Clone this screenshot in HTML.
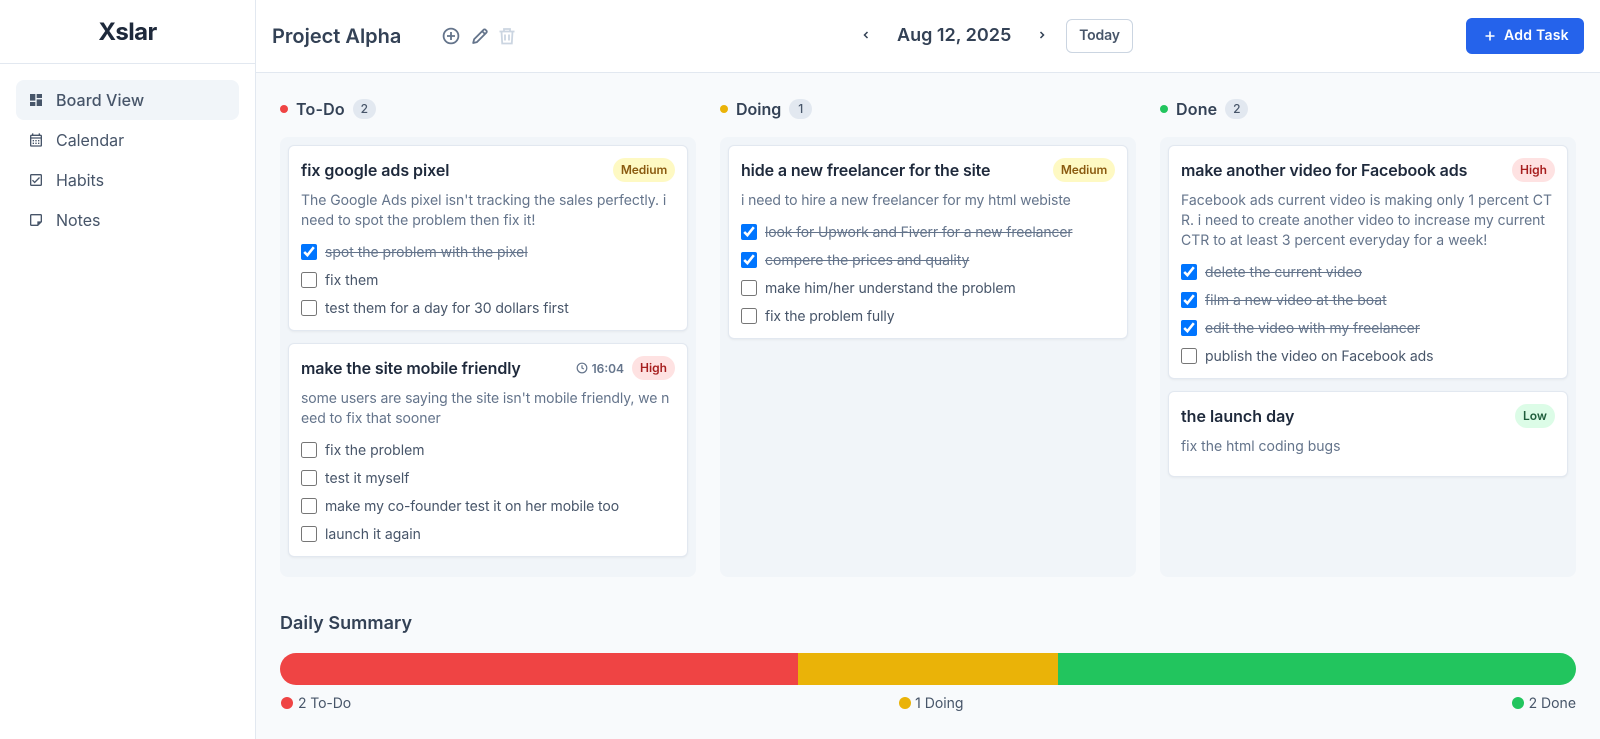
<!DOCTYPE html>
<html><head><meta charset="utf-8"><title>Xslar</title>
<style>
*{box-sizing:border-box}
html,body{margin:0;padding:0;width:1600px;height:739px;overflow:hidden;background:#f8fafc;font-family:Inter,"Liberation Sans",sans-serif;color:#334155}
.side{position:absolute;left:0;top:0;width:256px;height:739px;background:#fff;border-right:1px solid #e2e8f0}
.logo{height:64px;border-bottom:1px solid #e2e8f0;text-align:center;font-size:24px;font-weight:700;line-height:64px;color:#1e293b;letter-spacing:-.6px}
.nav{padding:16px}
.nav div{height:40px;border-radius:8px;display:flex;align-items:center;padding-left:12px;font-size:16px;color:#475569;gap:12px}
.nav div.on{background:#f1f5f9;font-weight:500;letter-spacing:.1px}
.nav svg{width:16px;height:16px;fill:#475569;flex:none}
.top{position:absolute;left:256px;top:0;width:1344px;height:73px;background:#fff;border-bottom:1px solid #e2e8f0}
.a{position:absolute;white-space:nowrap}
.col-h{position:absolute;top:95px;height:28px;display:flex;align-items:center;font-size:16px;font-weight:600;color:#334155;letter-spacing:.2px}
.dot{width:8px;height:8px;border-radius:50%;margin-right:8px}
.cnt{margin-left:8px;height:20px;width:23px;border-radius:10px;background:#e2e8f0;font-size:12px;font-weight:500;color:#475569;text-align:center;line-height:20px;letter-spacing:0}
.col{position:absolute;top:137px;width:416px;height:440px;background:#f1f5f9;border-radius:8px;padding:8px;display:flex;flex-direction:column;gap:12px}
.card{background:#fff;border:1px solid #e2e8f0;border-radius:6px;padding:12px;box-shadow:0 1px 2px rgba(0,0,0,.05)}
.hd{display:flex;align-items:center;height:24px}
.t{font-size:16px;font-weight:600;color:#1e293b;flex:1;white-space:nowrap}
.b{height:24px;border-radius:12px;padding:0 8px;font-size:12px;font-weight:600;line-height:24px;white-space:nowrap}
.m{background:#fef9c3;color:#8a5a10;width:62px;padding:0;text-align:center;letter-spacing:-.1px}.h{background:#fee2e2;color:#a61e1e}.l{background:#dcfce7;color:#1f5e3c}
.tm{display:flex;align-items:center;font-size:12px;font-weight:600;color:#64748b;margin-right:8px;gap:4px}
.d{margin:8px 0;font-size:14px;line-height:20px;color:#64748b;white-space:nowrap;position:relative;top:1px}
.d span{display:block}
.li{margin-top:12px;display:flex;flex-direction:column;gap:8px}
.li label{display:flex;align-items:center;height:20px;font-size:14px;color:#475569;gap:8px;white-space:nowrap}
.li input{width:16px;height:16px;margin:0;flex:none}
.li s{color:#64748b}
.sum{left:280px;top:611px;font-size:18px;font-weight:600;line-height:26px;color:#334155;letter-spacing:.05px}
.bar{position:absolute;left:280px;top:653px;width:1296px;height:32px;border-radius:16px;overflow:hidden;display:flex}
.bar i{display:block;height:32px}
.leg{position:absolute;left:280px;top:693px;width:1296px;height:20px;display:flex;justify-content:space-between;font-size:14px;color:#475569}
.leg span{display:flex;align-items:center;gap:5px}
.leg i{display:block;width:12px;height:12px;border-radius:50%}
</style></head><body>
<div class="side">
<div class="logo">Xslar</div>
<div class="nav">
<div class="on"><svg viewBox="0 0 24 24"><path d="M3 13h8V3H3v10zm0 8h8v-6H3v6zm10 0h8V11h-8v10zm0-18v6h8V3h-8z"/></svg>Board View</div>
<div><svg viewBox="0 0 24 24"><path d="M19 4h-1V2h-2v2H8V2H6v2H5c-1.11 0-1.99.9-1.99 2L3 20c0 1.1.89 2 2 2h14c1.1 0 2-.9 2-2V6c0-1.1-.9-2-2-2zm0 16H5V10h14v10zm0-12H5V6h14v2zM9 14H7v-2h2v2zm4 0h-2v-2h2v2zm4 0h-2v-2h2v2zm-8 4H7v-2h2v2zm4 0h-2v-2h2v2zm4 0h-2v-2h2v2z"/></svg>Calendar</div>
<div><svg viewBox="0 0 24 24"><path d="M19 3H5c-1.1 0-2 .9-2 2v14c0 1.1.9 2 2 2h14c1.1 0 2-.9 2-2V5c0-1.1-.9-2-2-2zm0 16H5V5h14v14zM17.99 9l-1.41-1.42-6.59 6.59-2.58-2.57-1.42 1.41 4 3.99z"/></svg>Habits</div>
<div><svg viewBox="0 0 24 24"><path d="M19 3H4.99C3.89 3 3 3.9 3 5l.01 14c0 1.1.89 2 1.99 2h10l6-6V5c0-1.1-.9-2-2-2zM5 19V5h14v9h-5v5H5z"/></svg>Notes</div>
</div></div>

<div class="top"></div>
<div class="a" style="left:272px;top:22px;font-size:20px;font-weight:600;line-height:28px;color:#334155">Project Alpha</div>
<svg class="a" style="left:442px;top:27px" width="18" height="18" viewBox="0 0 18 18" fill="none" stroke="#64748b" stroke-width="1.8"><circle cx="9" cy="9" r="7.4"/><path d="M9 5v8M5 9h8"/></svg>
<svg class="a" style="left:471px;top:27px" width="18" height="18" viewBox="0 0 18 18" fill="none" stroke="#64748b" stroke-width="1.8" stroke-linejoin="round"><path d="M2.200 16l.9-3.700L12.600 2.800a1.300 1.300 0 0 1 1.900 0l.9.900a1.300 1.300 0 0 1 0 1.900L5.900 15.100z"/><path d="M11.200 4.200l2.800 2.800"/></svg>
<svg class="a" style="left:498px;top:27px" width="18" height="18" viewBox="0 0 18 18" fill="none" stroke="#cbd5e1" stroke-width="1.8"><path d="M1.500 4.500h15M6 4.500V2h6v2.500M3.500 4.500l.7 12h9.600l.7-12M7 7.500v6M11 7.500v6"/></svg>
<svg class="a" style="left:862px;top:30px" width="8" height="10" viewBox="0 0 8 10" fill="none" stroke="#334155" stroke-width="1.5"><path d="M5.500 2L2.500 5l3 3"/></svg>
<div class="a" style="left:897px;top:22px;font-size:18px;font-weight:600;line-height:28px;color:#334155">Aug 12, 2025</div>
<svg class="a" style="left:1038px;top:30px" width="8" height="10" viewBox="0 0 8 10" fill="none" stroke="#334155" stroke-width="1.5"><path d="M2.500 2l3 3-3 3"/></svg>
<div class="a" style="left:1066px;top:19px;width:67px;height:34px;border:1px solid #cbd5e1;border-radius:6px;background:#fff;text-align:center;line-height:32px;font-size:14px;font-weight:600;color:#475569;letter-spacing:-.15px">Today</div>
<div class="a" style="left:1466px;top:18px;width:118px;height:36px;border-radius:6px;background:#2563eb"></div>
<svg class="a" style="left:1485px;top:31px" width="10" height="10" viewBox="0 0 10 10" stroke="#fff" stroke-width="1.600"><path d="M5 .500v9M.500 5h9"/></svg>
<div class="a" style="left:1504px;top:18px;line-height:36px;font-size:14px;font-weight:600;color:#fff;letter-spacing:.25px">Add Task</div>

<div class="col-h" style="left:280px"><span class="dot" style="background:#ef4444"></span>To-Do<span class="cnt">2</span></div>
<div class="col-h" style="left:720px;letter-spacing:0"><span class="dot" style="background:#eab308"></span>Doing<span class="cnt">1</span></div>
<div class="col-h" style="left:1160px"><span class="dot" style="background:#22c55e"></span>Done<span class="cnt">2</span></div>

<div class="col" style="left:280px">
<div class="card"><div class="hd"><div class="t" style="letter-spacing:-.05px">fix google ads pixel</div><div class="b m">Medium</div></div>
<div class="d"><span style="letter-spacing:-.035px">The Google Ads pixel isn't tracking the sales perfectly. i</span><span style="letter-spacing:-.03px">need to spot the problem then fix it!</span></div>
<div class="li"><label><input type="checkbox" checked><s style="letter-spacing:-.03px">spot the problem with the pixel</s></label><label><input type="checkbox">fix them</label><label><input type="checkbox"><span style="letter-spacing:-.05px">test them for a day for 30 dollars first</span></label></div></div>
<div class="card"><div class="hd"><div class="t" style="letter-spacing:-.1px">make the site mobile friendly</div><div class="tm"><svg width="12" height="12" viewBox="0 0 12 12" fill="none" stroke="#64748b" stroke-width="1.200" style="margin-left:-1px"><circle cx="6" cy="6" r="4.800"/><path d="M6 3.300V6l1.800 1"/></svg>16:04</div><div class="b h">High</div></div>
<div class="d"><span style="letter-spacing:-.1px">some users are saying the site isn't mobile friendly, we n</span><span style="letter-spacing:-.05px">eed to fix that sooner</span></div>
<div class="li"><label><input type="checkbox">fix the problem</label><label><input type="checkbox">test it myself</label><label><input type="checkbox"><span style="letter-spacing:-.09px">make my co-founder test it on her mobile too</span></label><label><input type="checkbox">launch it again</label></div></div>
</div>

<div class="col" style="left:720px">
<div class="card"><div class="hd"><div class="t" style="letter-spacing:-.12px">hide a new freelancer for the site</div><div class="b m">Medium</div></div>
<div class="d" style="letter-spacing:-.1px">i need to hire a new freelancer for my html webiste</div>
<div class="li"><label><input type="checkbox" checked><s style="letter-spacing:-.13px">look for Upwork and Fiverr for a new freelancer</s></label><label><input type="checkbox" checked><s style="letter-spacing:-.03px">compere the prices and quality</s></label><label><input type="checkbox"><span style="letter-spacing:-.06px">make him/her understand the problem</span></label><label><input type="checkbox"><span style="letter-spacing:-.1px">fix the problem fully</span></label></div></div>
</div>

<div class="col" style="left:1160px">
<div class="card"><div class="hd"><div class="t" style="letter-spacing:-.115px">make another video for Facebook ads</div><div class="b h">High</div></div>
<div class="d"><span>Facebook ads current video is making only 1 percent CT</span><span style="letter-spacing:-.07px">R. i need to create another video to increase my current</span><span>CTR to at least 3 percent everyday for a week!</span></div>
<div class="li"><label><input type="checkbox" checked><s style="letter-spacing:-.04px">delete the current video</s></label><label><input type="checkbox" checked><s style="letter-spacing:-.04px">film a new video at the boat</s></label><label><input type="checkbox" checked><s style="letter-spacing:-.06px">edit the video with my freelancer</s></label><label><input type="checkbox"><span style="letter-spacing:-.06px">publish the video on Facebook ads</span></label></div></div>
<div class="card"><div class="hd"><div class="t">the launch day</div><div class="b l">Low</div></div>
<div class="d">fix the html coding bugs</div></div>
</div>

<div class="a sum">Daily Summary</div>
<div class="bar"><i style="width:518.4px;background:#ef4444"></i><i style="width:259.2px;background:#eab308"></i><i style="width:518.4px;background:#22c55e"></i></div>
<div class="leg"><span style="margin-left:1px;letter-spacing:-.1px"><i style="background:#ef4444"></i>2 To-Do</span><span style="gap:4px"><i style="background:#eab308"></i>1 Doing</span><span><i style="background:#22c55e"></i>2 Done</span></div>
</body></html>
